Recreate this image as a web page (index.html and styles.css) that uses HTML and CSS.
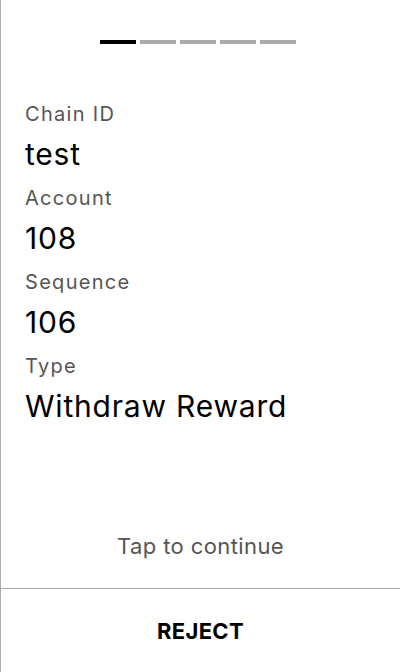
FILE: index.html
```html
<!DOCTYPE html>
<html>
<head>
<meta charset="utf-8">
<link rel="stylesheet" href="styles.css">
</head>
<body>
<div class="screen">
  <div class="steps">
    <span class="step active"></span>
    <span class="step"></span>
    <span class="step"></span>
    <span class="step"></span>
    <span class="step"></span>
  </div>
  <div class="fields">
    <div class="label">Chain ID</div>
    <div class="value">test</div>
    <div class="label">Account</div>
    <div class="value">108</div>
    <div class="label">Sequence</div>
    <div class="value">106</div>
    <div class="label">Type</div>
    <div class="value">Withdraw Reward</div>
  </div>
  <div class="tap">Tap to continue</div>
  <div class="reject">REJECT</div>
</div>
</body>
</html>
```
FILE: styles.css
```css
html, body {
  margin: 0;
  padding: 0;
  background: #fff;
}
body {
  font-family: Inter, "Noto Sans", sans-serif;
}
.screen {
  box-sizing: border-box;
  width: 400px;
  height: 672px;
  border-left: 1px solid #aaaaaa;
  display: flex;
  flex-direction: column;
}
.steps {
  display: flex;
  gap: 4px;
  padding: 40px 0 0 99px;
}
.step {
  width: 36px;
  height: 4px;
  background: #aaaaaa;
}
.step.active {
  background: #000;
}
.fields {
  padding: 50px 24px 0;
  flex: 1;
}
.label {
  font-size: 20px;
  line-height: 40px;
  letter-spacing: 1.3px;
  color: #555555;
}
.value {
  font-size: 30px;
  line-height: 40px;
  letter-spacing: 0.8px;
  margin-bottom: 4px;
  color: #000;
}
.tap {
  text-align: center;
  font-size: 22px;
  letter-spacing: 0.4px;
  color: #555555;
  line-height: 30px;
  padding-bottom: 27px;
}
.reject {
  border-top: 1px solid #aaaaaa;
  height: 83px;
  display: flex;
  align-items: center;
  justify-content: center;
  font-size: 22px;
  font-weight: 700;
  letter-spacing: 0.3px;
  color: #000;
}
```
